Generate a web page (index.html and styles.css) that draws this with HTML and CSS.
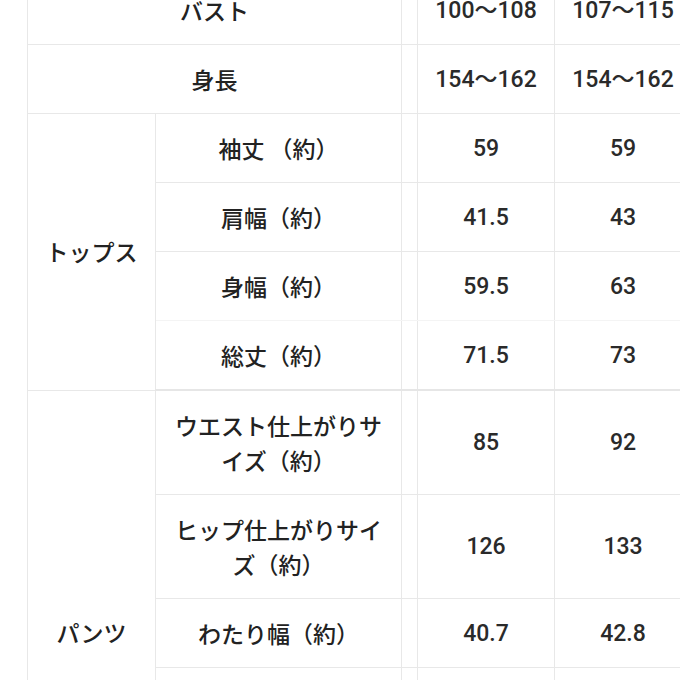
FILE: index.html
```html
<!DOCTYPE html>
<html lang="ja">
<head>
<meta charset="utf-8">
<link rel="stylesheet" href="styles.css">
</head>
<body>
<div class="page">
<table class="size-table">
  <colgroup>
    <col class="c-cat"><col class="c-item"><col class="c-gap"><col class="c-val"><col class="c-val">
  </colgroup>
  <tbody>
    <tr><th colspan="2">バスト</th><td class="gap"></td><td>100〜108</td><td>107〜115</td></tr>
    <tr><th colspan="2">身長</th><td class="gap"></td><td>154〜162</td><td>154〜162</td></tr>
    <tr><th class="cat" rowspan="4">トップス</th><th>袖丈 （約）</th><td class="gap"></td><td>59</td><td>59</td></tr>
    <tr><th>肩幅（約）</th><td class="gap"></td><td>41.5</td><td>43</td></tr>
    <tr class="faint"><th>身幅（約）</th><td class="gap"></td><td>59.5</td><td>63</td></tr>
    <tr class="group-end"><th>総丈（約）</th><td class="gap"></td><td>71.5</td><td>73</td></tr>
    <tr><th class="cat" rowspan="6">パンツ</th><th>ウエスト仕上がりサイズ（約）</th><td class="gap"></td><td>85</td><td>92</td></tr>
    <tr><th>ヒップ仕上がりサイズ（約）</th><td class="gap"></td><td>126</td><td>133</td></tr>
    <tr><th>わたり幅（約）</th><td class="gap"></td><td>40.7</td><td>42.8</td></tr>
    <tr><th>股上（約）</th><td class="gap"></td><td>32</td><td>33</td></tr>
    <tr><th>股下（約）</th><td class="gap"></td><td>66</td><td>66</td></tr>
    <tr><th>総丈（約）</th><td class="gap"></td><td>96</td><td>98</td></tr>
  </tbody>
</table>
</div>
</body>
</html>
```
FILE: styles.css
```css
html, body {
  margin: 0;
  padding: 0;
  background: #ffffff;
  overflow: hidden;
}
.page {
  width: 680px;
  height: 680px;
  overflow: hidden;
}
.size-table {
  margin: -24px 0 0 27px;
  border-collapse: collapse;
  table-layout: fixed;
  width: 664px;
  font-family: Roboto, "Noto Sans CJK JP", sans-serif;
  font-size: 23px;
  line-height: 35px;
  color: #222222;
  border-left: 1px solid #e6e6e6;
}
.c-cat { width: 128px; }
.c-item { width: 246px; }
.c-gap { width: 16px; }
.c-val { width: 137px; }
.size-table th,
.size-table td {
  font-weight: 500;
  text-align: center;
  vertical-align: middle;
  padding: 16.5px 12px;
  border: 1px solid #e8e8e8;
  border-top: none;
}
.size-table td {
  color: #2a2a2a;
}
.size-table td.gap {
  padding: 0;
}
.size-table th {
  font-family: "Noto Sans CJK JP", sans-serif;
}
.size-table tr.faint th,
.size-table tr.faint td {
  border-bottom-color: #f4f4f4;
}
.size-table tr.group-end th,
.size-table tr.group-end td {
  border-bottom: 2px solid #e6e6e6;
}
```
